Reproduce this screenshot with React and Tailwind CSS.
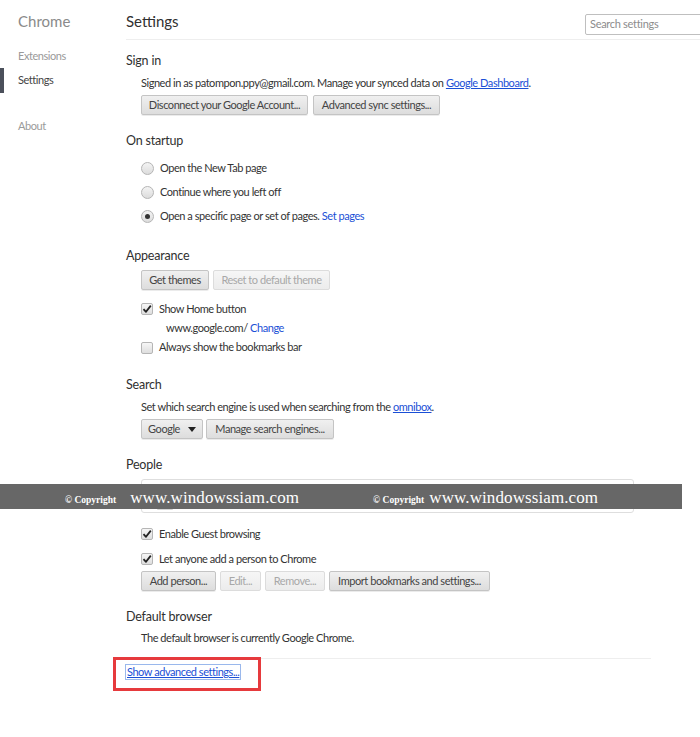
import React from "react";

const btn =
  "h-[20px] flex items-center justify-center whitespace-nowrap rounded-[2px] border border-[#c4c4c4] bg-gradient-to-b from-[#f0f0f0] to-[#dddddd] text-[#444] shadow-[0_1px_0_rgba(0,0,0,0.08)]";
const btnOff =
  "h-[20px] flex items-center justify-center whitespace-nowrap rounded-[2px] border border-[#dcdcdc] bg-gradient-to-b from-[#f6f6f6] to-[#ececec] text-[#a8a8a8]";

function Button({ w, off, children }) {
  return (
    <div className={off ? btnOff : btn} style={{ width: w }}>
      {children}
    </div>
  );
}

function Radio({ checked }) {
  return (
    <span className="w-[13px] h-[13px] rounded-full border border-[#b5b5b5] bg-gradient-to-b from-[#f4f4f4] to-[#dcdcdc] flex items-center justify-center">
      {checked && <span className="w-[5px] h-[5px] rounded-full bg-[#333]" />}
    </span>
  );
}

function Check({ checked }) {
  return (
    <span className="w-[12px] h-[12px] rounded-[2px] border border-[#b5b5b5] bg-gradient-to-b from-[#f6f6f6] to-[#dedede] flex items-center justify-center">
      {checked && (
        <svg width="10" height="10" viewBox="0 0 10 10">
          <path d="M1.5 5.2 L4 7.8 L8.8 1.6" fill="none" stroke="#222" strokeWidth="1.8" strokeLinejoin="round" />
        </svg>
      )}
    </span>
  );
}

function Heading({ mt, children }) {
  return (
    <div className={`${mt} h-[22px] flex items-center text-[12.5px] tracking-[-0.2px] text-[#303030]`}>{children}</div>
  );
}

export default function App() {
  return (
    <div className="relative w-[700px] h-[737px] overflow-hidden bg-white font-['Lato',sans-serif] text-[11px] tracking-[-0.45px] text-[#333]">
      <div className="flex">
        <aside className="w-[126px] shrink-0">
          <div className="h-[40px] flex items-center pl-[18px] pt-[3px] text-[15px] tracking-[0px] text-[#8a8a8a]">Chrome</div>
          <div className="mt-[5px] h-[22px] flex items-center pl-[18px] text-[#9a9a9a]">Extensions</div>
          <div className="mt-[1px] h-[25px] flex items-center border-l-4 border-[#4b505b] pl-[14px] text-[#444]">Settings</div>
          <div className="mt-[22px] h-[22px] flex items-center pl-[18px] text-[#9a9a9a]">About</div>
        </aside>

        <main className="flex-1">
          <div className="h-[40px] flex items-center justify-between border-b border-[#eeeeee] pt-[3px]">
            <span className="text-[15px] tracking-[0px] text-[#303030]">Settings</span>
            <div className="mt-[6px] w-[120px] h-[21px] -mr-[5px] border border-[#bfbfbf] rounded-[2px] flex items-center pl-[4px] tracking-[-0.3px] text-[#8c8c8c]">
              Search settings
            </div>
          </div>

          <Heading mt="mt-[10px]">Sign in</Heading>
          <div className="pl-[15px]">
            <div className="h-[22px] flex items-center">
              Signed in as patompon.ppy@gmail.com. Manage your synced data on&nbsp;
              <span className="text-[#1a4fd6] underline">Google Dashboard</span>.
            </div>
            <div className="mt-[1px] flex gap-[5px]">
              <Button w={167}>Disconnect your Google Account...</Button>
              <Button w={127}>Advanced sync settings...</Button>
            </div>
          </div>

          <Heading mt="mt-[15px]">On startup</Heading>
          <div className="pl-[15px] mt-[4px]">
            <div className="h-[24px] flex items-center gap-[6px]">
              <Radio />
              <span>Open the New Tab page</span>
            </div>
            <div className="h-[24px] flex items-center gap-[6px]">
              <Radio />
              <span>Continue where you left off</span>
            </div>
            <div className="h-[24px] flex items-center gap-[6px]">
              <Radio checked />
              <span>
                Open a specific page or set of pages. <span className="text-[#1a4fd6]">Set pages</span>
              </span>
            </div>
          </div>

          <Heading mt="mt-[17px]">Appearance</Heading>
          <div className="pl-[15px]">
            <div className="mt-[3px] flex gap-[4px]">
              <Button w={68}>Get themes</Button>
              <Button w={117} off>Reset to default theme</Button>
            </div>
            <div className="mt-[9px] h-[20px] flex items-center gap-[6px]">
              <Check checked />
              <span>Show Home button</span>
            </div>
            <div className="h-[19px] flex items-center pl-[25px]">
              www.google.com/&nbsp;<span className="text-[#1a4fd6]">Change</span>
            </div>
            <div className="h-[19px] flex items-center gap-[6px]">
              <Check />
              <span>Always show the bookmarks bar</span>
            </div>
          </div>

          <Heading mt="mt-[17px]">Search</Heading>
          <div className="pl-[15px]">
            <div className="h-[22px] flex items-center">
              Set which search engine is used when searching from the&nbsp;
              <span className="text-[#1a4fd6] underline">omnibox</span>.
            </div>
            <div className="mt-[1px] flex gap-[3px]">
              <div className={btn + " w-[62px] gap-[8px]"}>
                <span>Google</span>
                <svg width="8" height="5" viewBox="0 0 8 5">
                  <path d="M0 0 H8 L4 5 Z" fill="#222" />
                </svg>
              </div>
              <Button w={128}>Manage search engines...</Button>
            </div>
          </div>

          <Heading mt="mt-[15px]">People</Heading>
          <div className="pl-[15px]">
            <div className="mt-[3px] w-[493px] h-[34px] border border-[#dedede] rounded-[3px] flex items-end pl-[15px] pb-[2px]">
              <div className="w-[16px] h-[14px] bg-[#d6d6d6] rounded-[1px]" />
            </div>
            <div className="mt-[11px] h-[20px] flex items-center gap-[6px]">
              <Check checked />
              <span>Enable Guest browsing</span>
            </div>
            <div className="mt-[5px] h-[20px] flex items-center gap-[6px]">
              <Check checked />
              <span>Let anyone add a person to Chrome</span>
            </div>
            <div className="mt-[2px] flex gap-[4px]">
              <Button w={75}>Add person...</Button>
              <Button w={41} off>Edit...</Button>
              <Button w={60} off>Remove...</Button>
              <Button w={161}>Import bookmarks and settings...</Button>
            </div>
          </div>

          <Heading mt="mt-[15px]">Default browser</Heading>
          <div className="pl-[15px] h-[20px] flex items-center">The default browser is currently Google Chrome.</div>

          <div className="mt-[10px] -ml-[13px] w-[538px] border-t border-[#eeeeee]" />
          <div className="mt-[5px] -ml-[1px] flex">
            <span className="px-[1px] border border-[#9ab8ec] text-[#1a4fd6] underline leading-[14px]">
              Show advanced settings...
            </span>
          </div>
        </main>
      </div>

      <div className="absolute left-[113px] top-[657px] w-[148px] h-[34px] border-[3px] border-[#e63a3d]" />

      <div className="absolute left-0 top-[484px] w-[682px] h-[25px] bg-[#676767] flex items-baseline pt-[1px] font-['Liberation_Serif',serif] tracking-[0px] text-white">
        <span className="ml-[65px] text-[9.5px] font-bold">© Copyright</span>
        <span className="ml-[14px] text-[17px] tracking-[0.1px]">www.windowssiam.com</span>
        <span className="ml-[74px] text-[9.5px] font-bold">© Copyright</span>
        <span className="ml-[5px] text-[17px] tracking-[0.1px]">www.windowssiam.com</span>
      </div>
    </div>
  );
}
